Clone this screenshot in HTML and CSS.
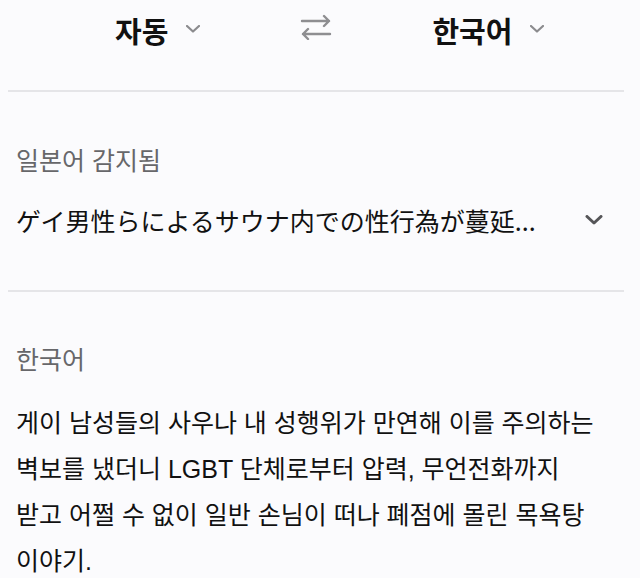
FILE: index.html
```html
<!DOCTYPE html>
<html lang="ko">
<head>
  <meta charset="UTF-8">
  <meta name="viewport" content="width=device-width, initial-scale=1.0">
  <title>번역</title>
  <link rel="stylesheet" href="styles.css">
</head>
<body>

<!-- 언어 선택 바 -->
<div class="lang-bar">
  <button class="lang-pick">
    <span>자동</span>
    <svg class="caret" viewBox="0 0 14 8" width="14" height="8"><path d="M1 1l6 5.5L13 1"/></svg>
  </button>
  <button class="swap" aria-label="언어 바꾸기">
    <svg viewBox="0 0 32 28" width="32" height="28"><path d="M2 9h27M24 4l5 5-5 5M30 22H3M8 17l-5 5 5 5"/></svg>
  </button>
  <button class="lang-pick">
    <span>한국어</span>
    <svg class="caret" viewBox="0 0 14 8" width="14" height="8"><path d="M1 1l6 5.5L13 1"/></svg>
  </button>
</div>

<!-- 원문 -->
<div class="panel source">
  <div class="panel-label">일본어 감지됨</div>
  <div class="source-row">
    <p class="source-text">ゲイ男性らによるサウナ内での性行為が蔓延...</p>
    <svg class="expand" viewBox="0 0 18 10" width="18" height="10"><path d="M2 1.5l7 6.5 7-6.5"/></svg>
  </div>
</div>

<!-- 번역 결과 -->
<div class="panel result">
  <div class="panel-label">한국어</div>
  <p class="result-text">게이 남성들의 사우나 내 성행위가 만연해 이를 주의하는 벽보를 냈더니 LGBT 단체로부터 압력, 무언전화까지 받고 어쩔 수 없이 일반 손님이 떠나 폐점에 몰린 목욕탕 이야기.</p>
</div>

</body>
</html>
```

FILE: styles.css
```css
/* 기본 */
body {
  margin: 0;
  background-color: #fbfbfd;
  color: #111;
  font-family: "Liberation Sans", "Noto Sans CJK KR", sans-serif;
}

/* 상단 언어 바 */
.lang-bar {
  display: flex;
  align-items: flex-start;
  gap: 100px;
  height: 92px;
  padding: 16px 0 0 107px;
  box-sizing: border-box;
  margin: 0 16px 0 8px;
  border-bottom: 2px solid #e5e5e8;
}
.lang-bar button {
  background: none;
  border: none;
  padding: 0;
  font: inherit;
  color: inherit;
  display: flex;
  align-items: center;
}
.lang-bar .lang-pick {
  gap: 18px;
  font-size: 29px;
  font-weight: bold;
  line-height: 34px;
}
.lang-pick .caret {
  fill: none;
  stroke: #8b8b8e;
  stroke-width: 2.2;
  stroke-linecap: round;
  stroke-linejoin: round;
  margin-top: -8px;
}
.lang-bar .swap {
  margin-top: -4px;
}
.swap svg {
  fill: none;
  stroke: #8e8e91;
  stroke-width: 2.4;
  stroke-linecap: round;
  stroke-linejoin: round;
}

/* 패널 */
.panel {
  margin: 0 16px 0 8px;
  padding: 0 19px 0 8px;
}
.panel-label {
  font-size: 25px;
  line-height: 30px;
  color: #67676a;
}
.source {
  padding-top: 54px;
  padding-bottom: 55px;
  border-bottom: 2px solid #e5e5e8;
}
.source-row {
  display: flex;
  align-items: center;
  justify-content: space-between;
  margin-top: 29px;
}
.source-text {
  margin: 0;
  font-family: "Noto Sans CJK JP", sans-serif;
  font-size: 25px;
  line-height: 30px;
}
.expand {
  fill: none;
  stroke: #555558;
  stroke-width: 3;
  stroke-linecap: round;
  stroke-linejoin: round;
  margin-right: 2px;
}
.result {
  padding-top: 53px;
}
.result-text {
  margin: 25px 0 0;
  font-size: 25px;
  line-height: 46px;
  word-break: keep-all;
}
```
